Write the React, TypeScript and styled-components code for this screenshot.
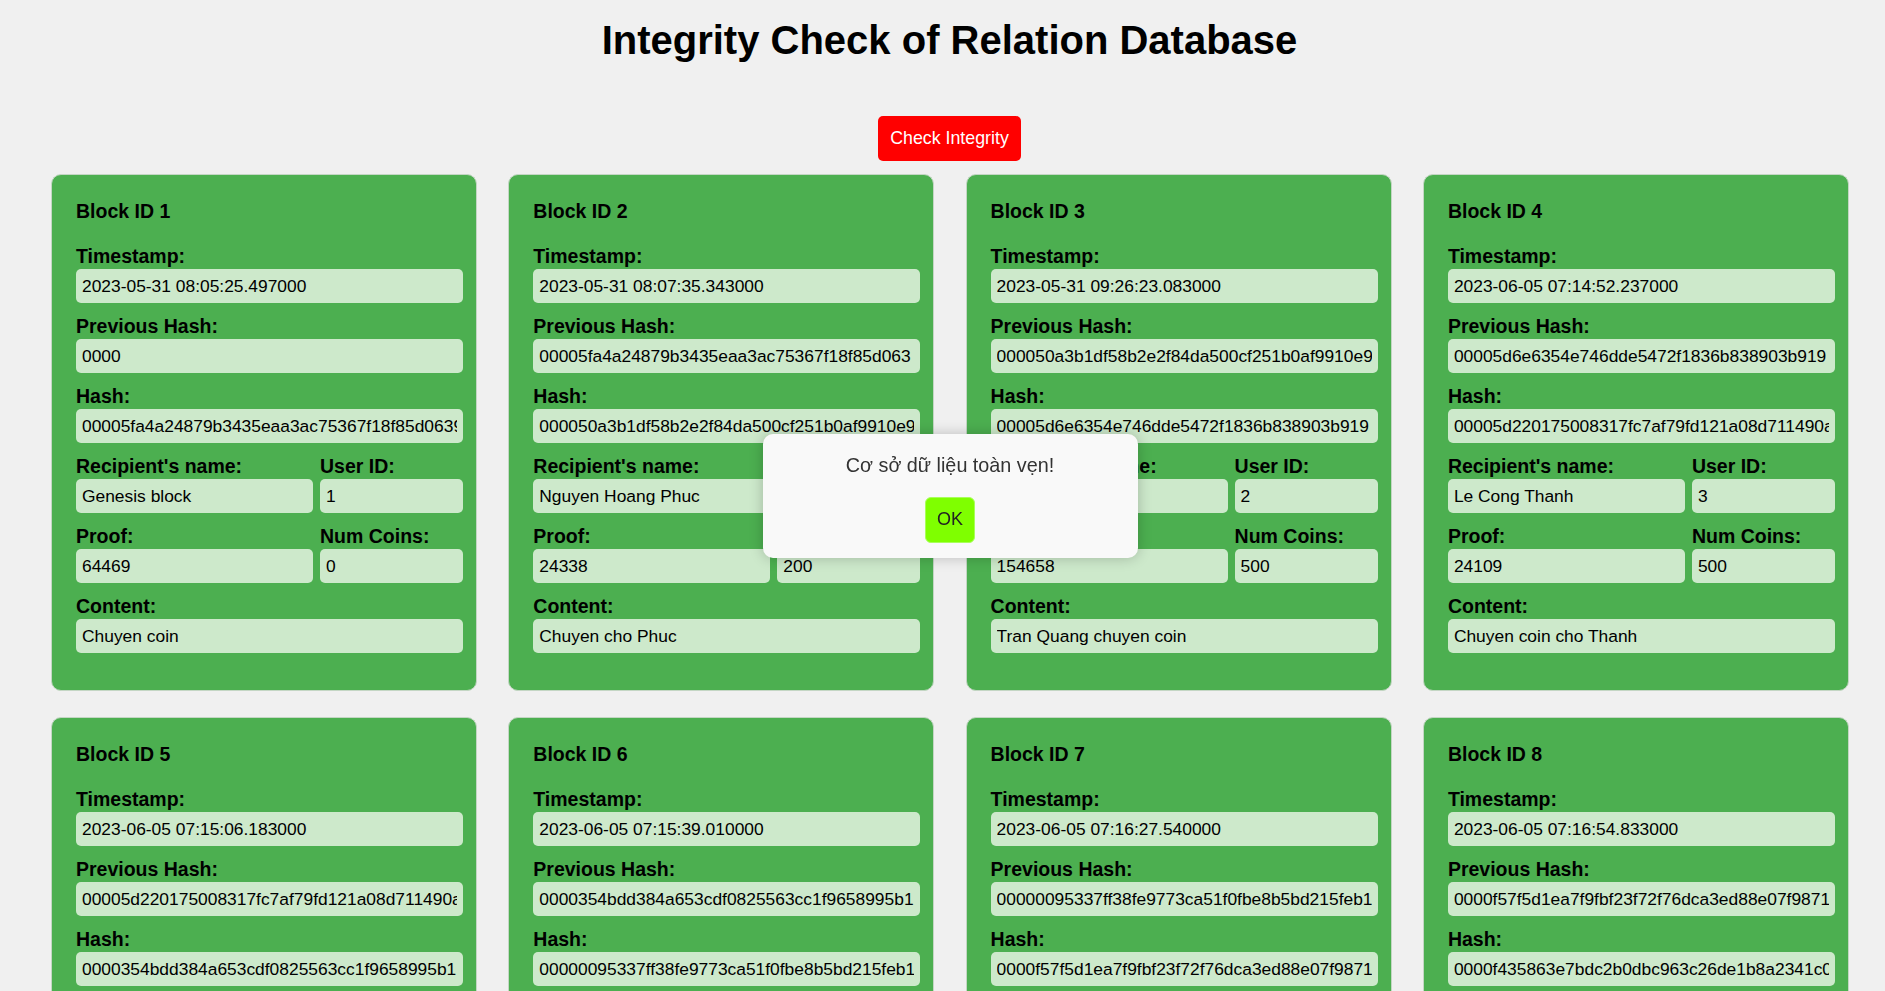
import React from "react";
import styled, { createGlobalStyle } from "styled-components";

type Block = {
  id: number;
  timestamp: string;
  previousHash: string;
  hash: string;
  recipient: string;
  userId: string;
  proof: string;
  numCoins: string;
  content: string;
};

const blocks: Block[] = [
  {
    id: 1,
    timestamp: "2023-05-31 08:05:25.497000",
    previousHash: "0000",
    hash: "00005fa4a24879b3435eaa3ac75367f18f85d0639b2e41c7a8",
    recipient: "Genesis block",
    userId: "1",
    proof: "64469",
    numCoins: "0",
    content: "Chuyen coin",
  },
  {
    id: 2,
    timestamp: "2023-05-31 08:07:35.343000",
    previousHash: "00005fa4a24879b3435eaa3ac75367f18f85d063",
    hash: "000050a3b1df58b2e2f84da500cf251b0af9910e9c3d7a51f2",
    recipient: "Nguyen Hoang Phuc",
    userId: "1",
    proof: "24338",
    numCoins: "200",
    content: "Chuyen cho Phuc",
  },
  {
    id: 3,
    timestamp: "2023-05-31 09:26:23.083000",
    previousHash: "000050a3b1df58b2e2f84da500cf251b0af9910e9c3d7a51f2",
    hash: "00005d6e6354e746dde5472f1836b838903b919",
    recipient: "Tran Quang",
    userId: "2",
    proof: "154658",
    numCoins: "500",
    content: "Tran Quang chuyen coin",
  },
  {
    id: 4,
    timestamp: "2023-06-05 07:14:52.237000",
    previousHash: "00005d6e6354e746dde5472f1836b838903b919",
    hash: "00005d220175008317fc7af79fd121a08d711490a6e3b58c27",
    recipient: "Le Cong Thanh",
    userId: "3",
    proof: "24109",
    numCoins: "500",
    content: "Chuyen coin cho Thanh",
  },
  {
    id: 5,
    timestamp: "2023-06-05 07:15:06.183000",
    previousHash: "00005d220175008317fc7af79fd121a08d711490a6e3b58c27",
    hash: "0000354bdd384a653cdf0825563cc1f9658995b1",
    recipient: "Nguyen Van An",
    userId: "4",
    proof: "31872",
    numCoins: "150",
    content: "Chuyen coin cho An",
  },
  {
    id: 6,
    timestamp: "2023-06-05 07:15:39.010000",
    previousHash: "0000354bdd384a653cdf0825563cc1f9658995b1",
    hash: "00000095337ff38fe9773ca51f0fbe8b5bd215feb1",
    recipient: "Tran Minh Duc",
    userId: "5",
    proof: "88214",
    numCoins: "300",
    content: "Chuyen cho Duc",
  },
  {
    id: 7,
    timestamp: "2023-06-05 07:16:27.540000",
    previousHash: "00000095337ff38fe9773ca51f0fbe8b5bd215feb1",
    hash: "0000f57f5d1ea7f9fbf23f72f76dca3ed88e07f9871",
    recipient: "Pham Thu Ha",
    userId: "6",
    proof: "47390",
    numCoins: "250",
    content: "Chuyen coin cho Ha",
  },
  {
    id: 8,
    timestamp: "2023-06-05 07:16:54.833000",
    previousHash: "0000f57f5d1ea7f9fbf23f72f76dca3ed88e07f9871",
    hash: "0000f435863e7bdc2b0dbc963c26de1b8a2341c07f5e9a1b86",
    recipient: "Hoang Gia Bao",
    userId: "7",
    proof: "62051",
    numCoins: "100",
    content: "Chuyen cho Bao",
  },
];

export default function App() {
  return (
    <>
      <GlobalStyle />
      <Page>
        <Title>Integrity Check of Relation Database</Title>
        <CheckButton>Check Integrity</CheckButton>
        <BlockGrid>
          {blocks.map((b) => (
            <BlockCard key={b.id}>
              <BlockTitle>Block ID {b.id}</BlockTitle>
              <Fields>
                <Field>
                  <Label>Timestamp:</Label>
                  <Value readOnly value={b.timestamp} />
                </Field>
                <Field>
                  <Label>Previous Hash:</Label>
                  <Value readOnly value={b.previousHash} />
                </Field>
                <Field>
                  <Label>Hash:</Label>
                  <Value readOnly value={b.hash} />
                </Field>
                <PairRow>
                  <Field>
                    <Label>Recipient's name:</Label>
                    <Value readOnly value={b.recipient} />
                  </Field>
                  <Field>
                    <Label>User ID:</Label>
                    <Value readOnly value={b.userId} />
                  </Field>
                </PairRow>
                <PairRow>
                  <Field>
                    <Label>Proof:</Label>
                    <Value readOnly value={b.proof} />
                  </Field>
                  <Field>
                    <Label>Num Coins:</Label>
                    <Value readOnly value={b.numCoins} />
                  </Field>
                </PairRow>
                <Field>
                  <Label>Content:</Label>
                  <Value readOnly value={b.content} />
                </Field>
              </Fields>
            </BlockCard>
          ))}
        </BlockGrid>
      </Page>

      <AlertBox>
        <AlertText>Cơ sở dữ liệu toàn vẹn!</AlertText>
        <OkButton>OK</OkButton>
      </AlertBox>
    </>
  );
}

const GlobalStyle = createGlobalStyle`
  html {
    scrollbar-width: none;
  }
  html::-webkit-scrollbar {
    display: none;
  }
  body {
    margin: 0;
    background: #f0f0f0;
    font-family: "Liberation Sans", Arial, sans-serif;
    color: #000;
  }
`;

// the original page is centred 7px right of the window centre
const Page = styled.div`
  display: flex;
  flex-direction: column;
  align-items: center;
  padding: 17px 0 40px 14px;
`;

const Title = styled.h1`
  margin: 0;
  font-size: 40px;
  line-height: 46px;
  font-weight: bold;
  text-align: center;
`;

const CheckButton = styled.button`
  margin-top: 53px;
  height: 45px;
  padding: 0 12px;
  border: none;
  border-radius: 5px;
  background: #ff0000;
  color: #fff;
  font-family: "Liberation Sans", Arial, sans-serif;
  font-size: 17.8px;
  cursor: pointer;
`;

const BlockGrid = styled.div`
  align-self: stretch;
  margin-top: 13px;
  padding: 0 37px;
  display: grid;
  grid-template-columns: repeat(4, 426px);
  column-gap: 31.3px;
  row-gap: 26px;
`;

const BlockCard = styled.div`
  background: #4caf50;
  border: 1px solid #c4d6c4;
  border-radius: 10px;
  padding: 25px 13px 37px 24px;
`;

const BlockTitle = styled.div`
  font-size: 19.5px;
  line-height: 22px;
  font-weight: bold;
  margin-bottom: 23px;
`;

const Fields = styled.div`
  display: flex;
  flex-direction: column;
  gap: 12px;
`;

const Field = styled.div`
  display: flex;
  flex-direction: column;
  gap: 2px;
  min-width: 0;
`;

const PairRow = styled.div`
  display: grid;
  grid-template-columns: 237fr 143fr;
  column-gap: 7px;
`;

const Label = styled.label`
  font-size: 19.5px;
  line-height: 22px;
  font-weight: bold;
  white-space: nowrap;
`;

const Value = styled.input`
  box-sizing: border-box;
  width: 100%;
  height: 34px;
  padding: 0 6px;
  border: none;
  border-radius: 5px;
  background: #cde9cb;
  color: #000;
  font-family: "Liberation Sans", Arial, sans-serif;
  font-size: 17.4px;
  outline: none;
`;

const AlertBox = styled.div`
  position: fixed;
  top: calc(50% - 62px);
  left: calc(50% - 180px);
  width: 375px;
  box-sizing: border-box;
  padding: 21px 20px 15px;
  display: flex;
  flex-direction: column;
  align-items: center;
  background: #f9f9f9;
  border-radius: 10px;
  box-shadow: 0 0 14px rgba(0, 0, 0, 0.22);
`;

const AlertText = styled.p`
  margin: 0 0 21px;
  font-size: 19.8px;
  line-height: 21px;
  color: #333;
`;

const OkButton = styled.button`
  width: 50px;
  height: 46px;
  border: 1px solid #a8ff5a;
  border-radius: 6px;
  background: #7fff00;
  color: #222;
  font-family: "Liberation Sans", Arial, sans-serif;
  font-size: 18px;
  cursor: pointer;
`;
